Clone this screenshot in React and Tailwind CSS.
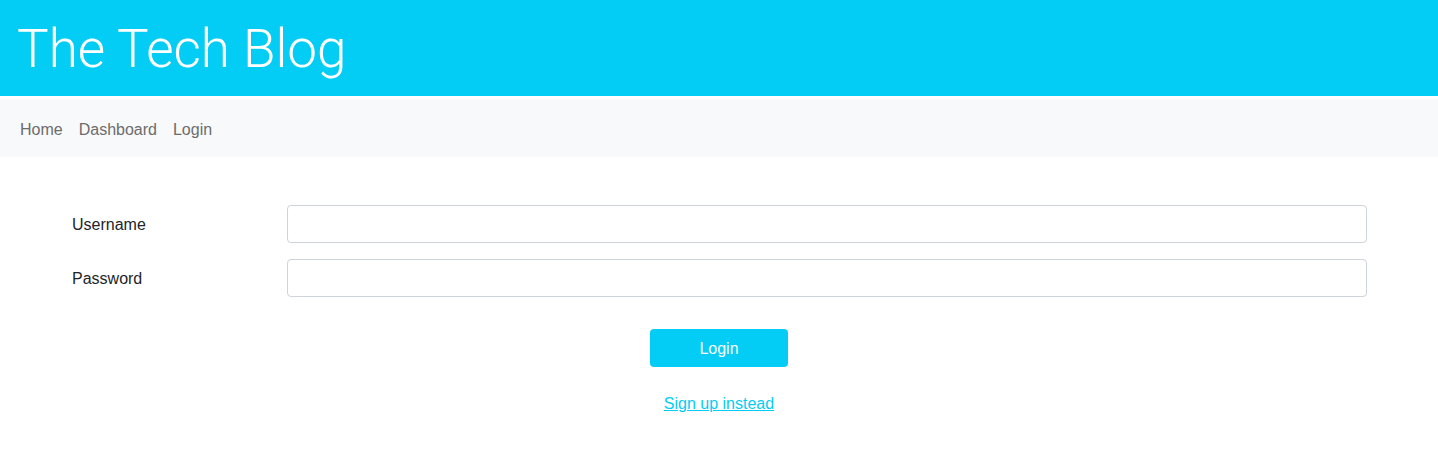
import React from "react";

const App = () => {
  return (
    <div className="min-h-screen bg-white font-['Liberation_Sans',Arial,sans-serif] text-[#212529]">
      <header className="h-[96px] bg-[#03cdf4] flex items-center px-[17px]">
        <h1 className="font-['Roboto',sans-serif] text-[53px] font-light text-white leading-none pt-[2px]">
          The Tech Blog
        </h1>
      </header>
      <nav className="mt-[3px] h-[58px] bg-[#f8f9fa] flex items-center px-[20px] pt-[3px] gap-4 text-[16px] text-[#6c6c6c]">
        <a href="#">Home</a>
        <a href="#">Dashboard</a>
        <a href="#">Login</a>
      </nav>

      <main className="px-[71px] pt-[48px]">
        <form className="flex flex-col gap-4">
          <div className="flex items-center">
            <label className="w-[216px] shrink-0 text-[16px] pl-[1px] pt-[1px]">Username</label>
            <input
              type="text"
              className="flex-1 h-[38px] border border-[#ced4da] rounded-[4px] px-3"
            />
          </div>
          <div className="flex items-center">
            <label className="w-[216px] shrink-0 text-[16px] pl-[1px] pt-[1px]">Password</label>
            <input
              type="password"
              className="flex-1 h-[38px] border border-[#ced4da] rounded-[4px] px-3"
            />
          </div>
        </form>

        <div className="flex flex-col items-center mt-[32px]">
          <button className="w-[138px] h-[38px] pt-[1px] bg-[#03cdf4] text-white text-[16px] rounded-[4px]">
            Login
          </button>
          <a href="#" className="mt-[25px] text-[16px] text-[#03cdf4] underline">
            Sign up instead
          </a>
        </div>
      </main>
    </div>
  );
};

export default App;
